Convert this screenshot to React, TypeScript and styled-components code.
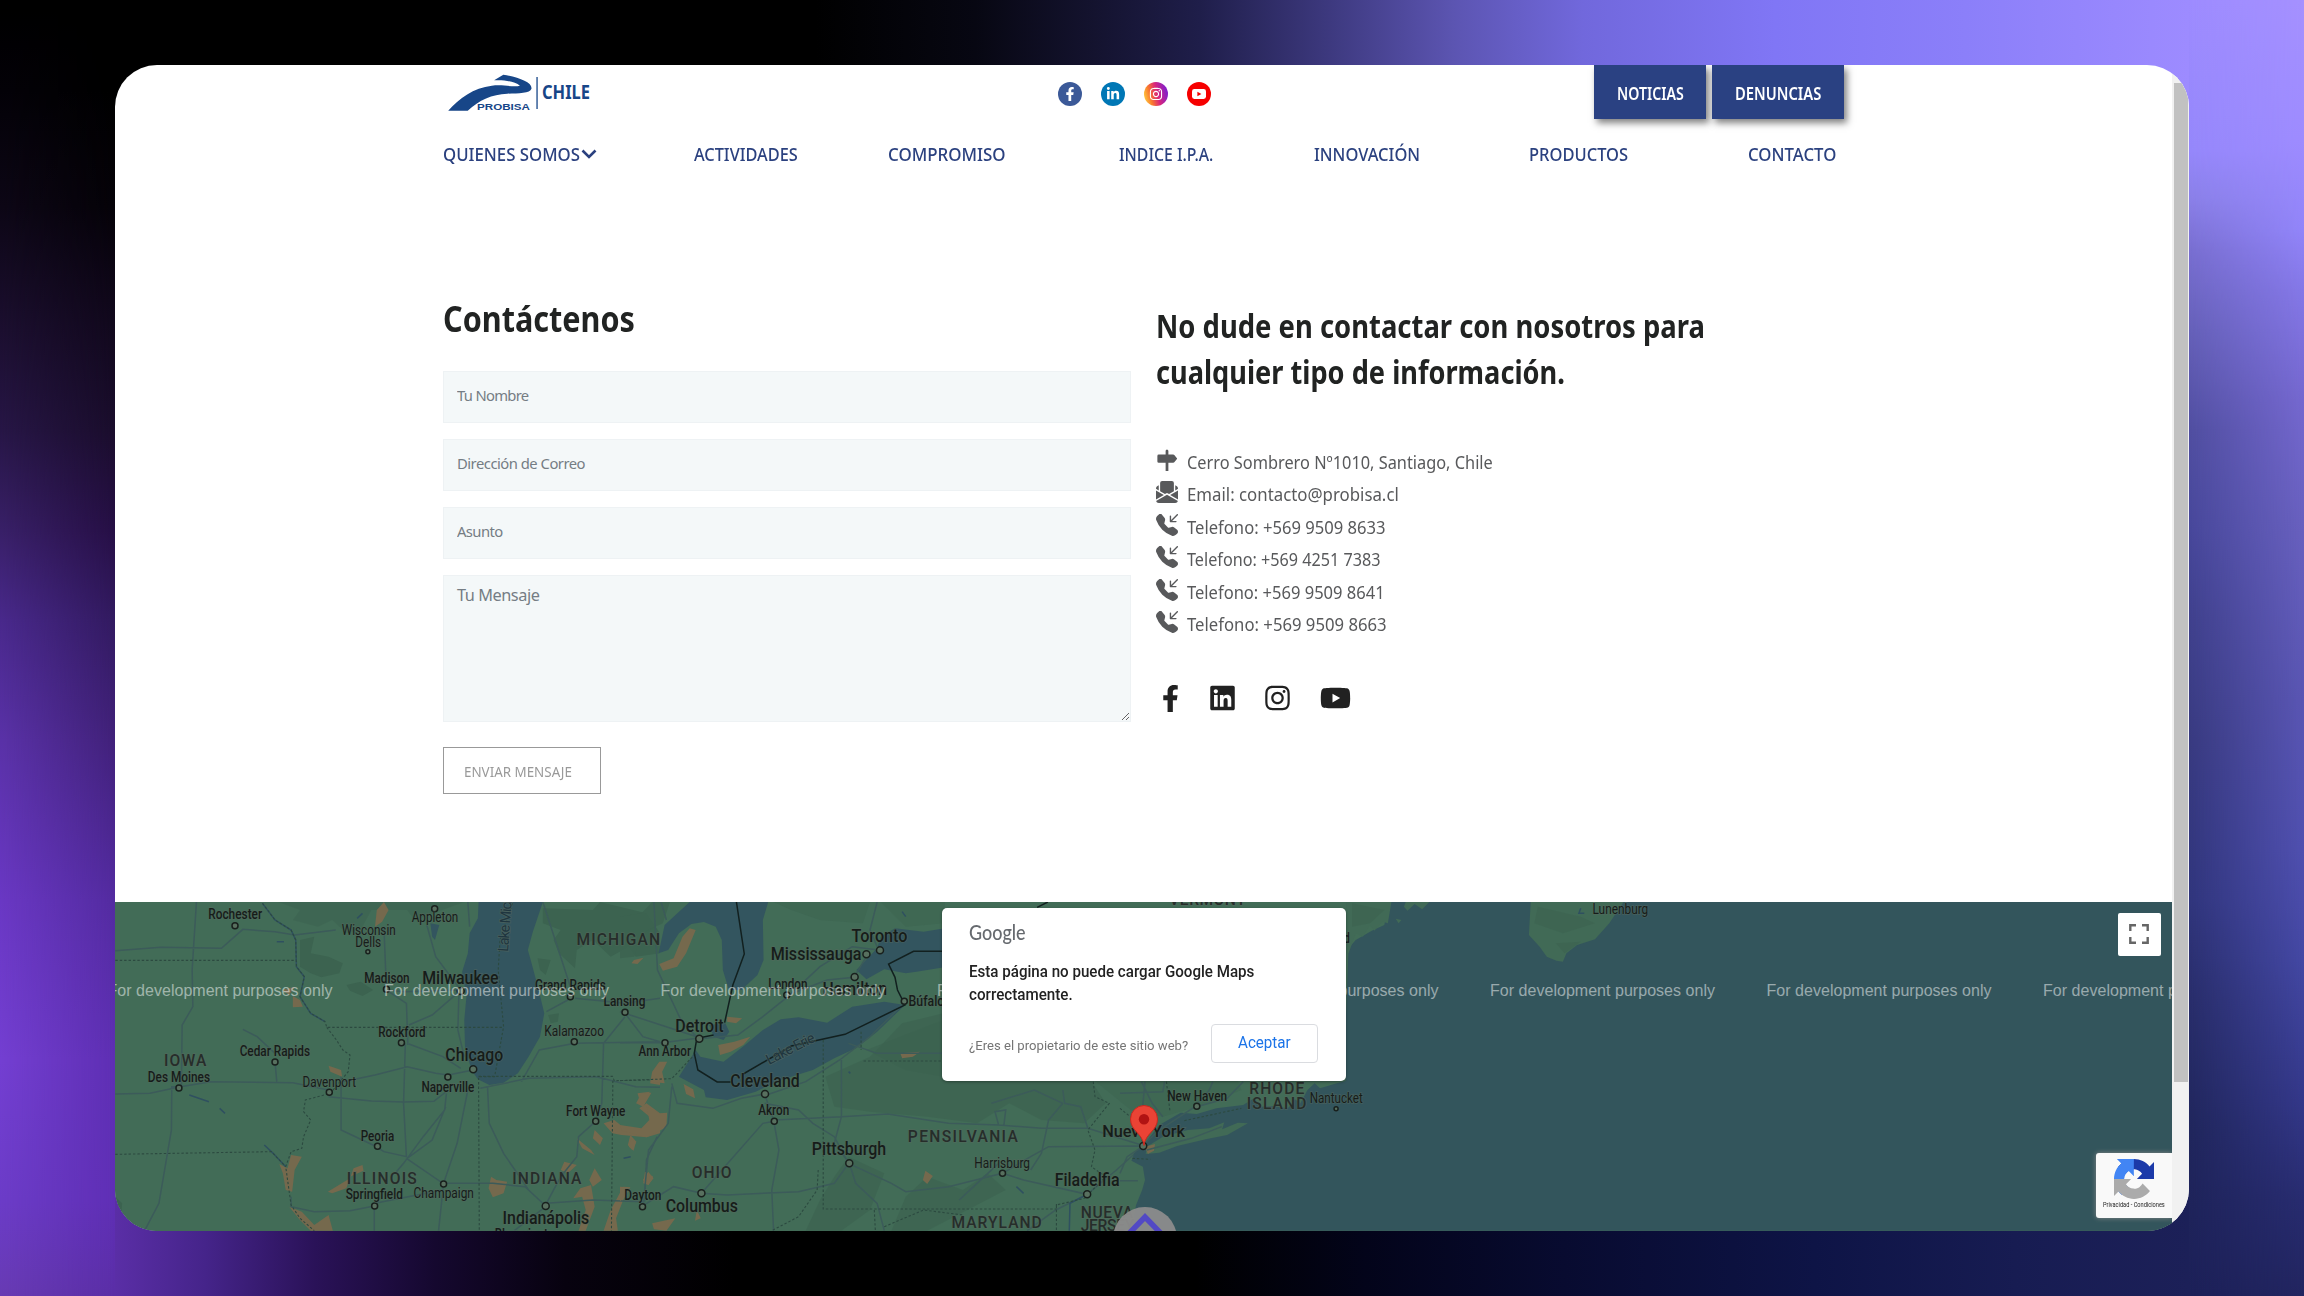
import React, { useLayoutEffect, useRef, useState } from "react";
import styled, { createGlobalStyle } from "styled-components";
import { BsSignpostFill, BsEnvelopePaperFill, BsTelephoneInboundFill } from "react-icons/bs";
import { FaFacebookF, FaLinkedin, FaInstagram, FaYoutube, FaLinkedinIn } from "react-icons/fa";

const GlobalStyle = createGlobalStyle`
  * { box-sizing: border-box; }
  body { margin: 0; background: #000; font-family: "Noto Sans", "Open Sans", sans-serif; }
  h1, h2, p, ul { margin: 0; padding: 0; font-weight: inherit; }
`;

/* ---------- Backdrop ---------- */

const Backdrop = styled.div`
  width: 2304px;
  height: 1296px;
  display: grid;
  grid-template-columns: 115px 2074px 115px;
  grid-template-rows: 65px 1166px 65px;
  overflow: hidden;
`;

const Edge = styled.div<{ $outer: string; $inner: string; $fade: string; $area: string }>`
  grid-area: ${(p) => p.$area};
  display: grid;
  background: linear-gradient(180deg, ${(p) => p.$outer});
  &::after {
    content: "";
    background: linear-gradient(180deg, ${(p) => p.$inner});
    mask-image: linear-gradient(${(p) => p.$fade}, transparent, #000);
  }
`;

const TopEdge = styled.div`
  grid-area: 1 / 2 / 3 / 3;
  height: 180px;
  background: linear-gradient(90deg, #000 0, #000 700px, #070712 860px, #14132f 980px, #1f1e4a 1085px, #3c387d 1210px,
    #5c55b2 1340px, #7168dc 1468px, #8076f5 1660px, #8b7ff9 1850px, #9d8bff 2074px);
`;

const BottomEdge = styled.div`
  grid-area: 2 / 2 / 4 / 3;
  align-self: end;
  height: 180px;
  background: linear-gradient(90deg, #5a2ea6 0, #45248a 90px, #2a1258 200px, #15082f 320px, #07020f 450px, #000 620px,
    #000 1080px, #03041a 1250px, #080b30 1450px, #0e1446 1700px, #171c52 1900px, #1c2058 2074px);
`;

const leftOuter =
  "#000 0, #040208 90px, #0d0716 207px, #1c0f30 330px, #271646 430px, #392068 530px, #49298c 620px, #5a32a8 740px, #6a38c4 900px, #743fd2 1060px, #6c3cc8 1200px, #683bb4 1296px";
const leftInner =
  "#000 0, #000 90px, #050208 207px, #0f0719 300px, #1a0d2c 430px, #260f45 530px, #321a60 620px, #41217a 740px, #532ba0 900px, #5e2fb3 1060px, #5f2fb5 1200px, #5a2ea6 1296px";
const rightOuter =
  "#a591ff 0, #9e8cff 140px, #9285fa 230px, #8578e8 290px, #7568d0 400px, #6961c0 520px, #5a56b4 700px, #5050b0 850px, #4448a4 960px, #34388a 1100px, #282c70 1200px, #222560 1296px";
const rightInner =
  "#9d8bff 0, #9587fb 150px, #8a80e8 197px, #786ed0 250px, #6560b8 330px, #504ea0 430px, #47479a 530px, #3f408c 620px, #383a80 740px, #30357c 900px, #282d6a 1000px, #20265c 1130px, #1c2058 1296px";

/* ---------- Browser window ---------- */

const Window = styled.div`
  grid-area: 2 / 2 / 3 / 3;
  z-index: 1;
  display: flex;
  overflow: hidden;
  border-radius: 42px;
  background: #fff;
`;

const Page = styled.div`
  width: 2057px;
  display: flex;
  flex-direction: column;
`;

const Scrollbar = styled.div`
  flex: 1;
  padding: 18px 1px 0 2px;
  background: #f1f1f1;
`;

const Thumb = styled.div`
  height: 999px;
  background: #c1c1c1;
`;

/* ---------- Text that keeps to a set measure ---------- */

const FitBox = styled.span<{ $width: number }>`
  display: block;
  width: ${(p) => p.$width}px;
  white-space: nowrap;
`;
const FitInner = styled.span`
  display: inline-block;
  transform-origin: 0 50%;
`;

function Fit({ width, children }: { width: number; children: React.ReactNode }) {
  const ref = useRef<HTMLSpanElement>(null);
  const [scale, setScale] = useState(1);
  useLayoutEffect(() => {
    const measure = () => {
      if (ref.current && ref.current.offsetWidth) setScale(width / ref.current.offsetWidth);
    };
    measure();
    document.fonts?.ready.then(measure);
  }, [width]);
  return (
    <FitBox $width={width}>
      <FitInner ref={ref} style={{ transform: `scaleX(${scale})` }}>
        {children}
      </FitInner>
    </FitBox>
  );
}

/* ---------- Header ---------- */

const Header = styled.header`
  padding: 0 328px 0 328px;
  height: 101px;
`;

const TopRow = styled.div`
  display: grid;
  grid-template-columns: 614.5px 536px 1fr;
  height: 77px;
`;

const LogoSlot = styled.div`
  padding-top: 5px;
`;

const SocialRow = styled.div`
  display: flex;
  gap: 19.2px;
  padding-top: 17px;
`;

const RoundIcon = styled.span<{ $bg: string }>`
  display: flex;
  align-items: center;
  justify-content: center;
  width: 24px;
  height: 24px;
  border-radius: 50%;
  background: ${(p) => p.$bg};
  color: #fff;
`;

const HeaderButtons = styled.div`
  display: flex;
  gap: 6px;
`;

const HeaderButton = styled.a<{ $width: number }>`
  width: ${(p) => p.$width}px;
  height: 54px;
  padding: 16px 0 0 23px;
  background: #2a4182;
  color: #fff;
  font-size: 17.5px;
  font-weight: 600;
  line-height: 24px;
  box-shadow: 3px 4px 7px rgba(0, 0, 0, 0.5);
`;

const Nav = styled.nav`
  display: grid;
  grid-template-columns: 251px 193.5px 231.3px 195.2px 215px 219px 1fr;
  color: #2b417f;
  font-size: 18.5px;
  font-weight: 500;
  line-height: 24px;
`;

const NavItem = styled.a`
  display: flex;
  align-items: center;
`;

/* ---------- Contact ---------- */

const Contact = styled.main`
  display: flex;
  height: 736px;
  padding: 132px 0 0 328px;
`;

const Form = styled.form`
  width: 713px;
`;

const FormTitle = styled.h1`
  height: 73px;
  color: #212322;
  font-size: 36px;
  font-weight: 700;
  line-height: 41px;
`;

const Field = styled.input<{ $tracking: string }>`
  display: block;
  width: 688px;
  height: 52px;
  margin-bottom: 16px;
  padding: 0 13px 4px;
  border: 1px solid #eef2f4;
  border-radius: 0;
  background: #f4f8f9;
  font: 14.8px "Noto Sans", sans-serif;
  letter-spacing: ${(p) => p.$tracking};
  &::placeholder { color: #757d84; opacity: 1; }
`;

const MessageBox = styled.textarea`
  display: block;
  width: 688px;
  height: 147px;
  padding: 7px 13px;
  border: 1px solid #eef2f4;
  background: #f4f8f9;
  font: 16.3px/24px "Noto Sans", sans-serif;
  letter-spacing: -0.45px;
  resize: vertical;
  &::placeholder { color: #757d84; opacity: 1; }
`;

const SendButton = styled.button`
  display: block;
  width: 158px;
  height: 47px;
  margin-top: 25px;
  padding: 0 0 0 20px;
  border: 1px solid #999;
  background: #fff;
  color: #999;
  font: 14.5px/20px "Noto Sans", sans-serif;
  text-align: left;
`;

const Info = styled.section`
  padding-top: 5px;
`;

const InfoTitle = styled.h2`
  color: #212322;
  font-size: 32.5px;
  font-weight: 700;
  line-height: 46px;
  height: 143px;
`;

const InfoList = styled.ul`
  list-style: none;
  color: #58595b;
`;

const InfoItem = styled.li`
  display: flex;
  gap: 8.5px;
  height: 32.4px;
  font-size: 18.3px;
  line-height: 32.4px;
  svg { flex: none; width: 22px; height: 22px; margin-top: 3px; }
`;

const InfoSocial = styled.div`
  display: flex;
  align-items: center;
  height: 28px;
  margin: 44px 0 0 6px;
  color: #212121;
`;

const SocialIcon = styled.a<{ $width: number; $height: number; $gap: number }>`
  display: flex;
  margin-right: ${(p) => p.$gap}px;
  svg { width: ${(p) => p.$width}px; height: ${(p) => p.$height}px; }
`;

/* ---------- Map ---------- */

const MapArea = styled.section`
  position: relative;
  height: 329px;
  overflow: hidden;
  background: #33555c;
  font-family: Roboto, sans-serif;
`;

const Dialog = styled.div`
  position: absolute;
  left: 827px;
  top: 5.5px;
  width: 404px;
  height: 173.5px;
  padding: 11px 28px 0 27px;
  border-radius: 5px;
  background: #fff;
  box-shadow: 0 1px 3px rgba(0, 0, 0, 0.35);
`;

const GoogleMark = styled.div`
  color: #666a6f;
  font: 500 20.5px/26px Lato, sans-serif;
`;

const DialogText = styled.p`
  padding-top: 15px;
  color: #222;
  font-size: 16px;
  font-weight: 500;
  line-height: 23.9px;
`;

const DialogFooter = styled.div`
  display: flex;
  align-items: center;
  justify-content: space-between;
  padding-top: 17px;
`;

const OwnerLink = styled.a`
  color: #757575;
  font-size: 13.6px;
  line-height: 20px;
  padding-top: 2px;
`;

const AcceptButton = styled.button`
  width: 107px;
  height: 39px;
  padding: 0 0 1px 26px;
  border: 1px solid #dadce0;
  border-radius: 4px;
  background: #fff;
  color: #1a73e8;
  font: 16px/20px Roboto, sans-serif;
  text-align: left;
`;

const FullscreenButton = styled.button`
  position: absolute;
  left: 2002.5px;
  top: 10.5px;
  width: 43.5px;
  height: 43.5px;
  display: flex;
  align-items: center;
  justify-content: center;
  padding: 0;
  border: 0;
  border-radius: 2px;
  background: #fff;
`;

const Recaptcha = styled.div`
  position: absolute;
  right: 0;
  top: 251px;
  width: 76px;
  height: 65px;
  padding: 6px 0 0 7px;
  border-radius: 3px 0 0 3px;
  background: #f9f9f9;
  box-shadow: 0 0 5px #888;
  color: #222;
  font: 7px/9px Roboto, sans-serif;
  svg { display: block; margin: 0 0 2px 11px; }
`;

const ToTop = styled.div`
  position: absolute;
  left: 998px;
  top: 305px;
  width: 64px;
  height: 64px;
  border-radius: 50%;
  background: rgba(140, 140, 140, 0.95);
  display: flex;
  justify-content: center;
  padding-top: 5px;
`;

const origins: Record<string, number> = { a: 100, b: 620, c: 1120 };

type Label = [sheet: string, x1: number, x2: number, base: number, text: string, size: number, weight: number];

const labels: Label[] = [
  ["a", 303, 454, 87, "Rochester", 14.3, 500],
  ["a", 677, 828, 135, "Wisconsin", 14.3, 400],
  ["a", 715, 787, 170, "Dells", 14.3, 400],
  ["a", 873, 1003, 97, "Appleton", 14.3, 400],
  ["a", 740, 867, 278, "Madison", 14.3, 500],
  ["a", 902, 1116, 282, "Milwaukee", 17.5, 500],
  ["a", 1218, 1416, 300, "Grand Rapids", 14.3, 500],
  ["a", 1410, 1527, 347, "Lansing", 14.3, 500],
  ["a", 1244, 1411, 437, "Kalamazoo", 14.3, 400],
  ["a", 779, 912, 440, "Rockford", 14.3, 500],
  ["a", 391, 588, 499, "Cedar Rapids", 14.3, 500],
  ["a", 134, 308, 577, "Des Moines", 14.3, 500],
  ["a", 567, 717, 590, "Davenport", 14.3, 400],
  ["a", 967, 1129, 513, "Chicago", 17.5, 500],
  ["a", 900, 1048, 606, "Naperville", 14.3, 500],
  ["a", 1305, 1471, 677, "Fort Wayne", 14.3, 500],
  ["a", 730, 824, 752, "Peoria", 14.3, 500],
  ["a", 688, 848, 927, "Springfield", 14.3, 500],
  ["a", 878, 1047, 924, "Champaign", 14.3, 400],
  ["a", 1127, 1370, 1002, "Indianápolis", 17.5, 500],
  ["a", 1105, 1290, 1048, "Bloomington", 14.3, 500],
  ["b", 422, 676, 211, "Mississauga", 17.5, 500],
  ["b", 648, 805, 156, "Toronto", 17.5, 500],
  ["b", 567, 748, 314, "Hamilton", 17.5, 500],
  ["b", 415, 525, 296, "London", 14.3, 500],
  ["b", 808, 908, 347, "Búfalo", 14.8, 500],
  ["b", 155, 290, 426, "Detroit", 17.5, 500],
  ["b", 52, 199, 499, "Ann Arbor", 14.3, 500],
  ["b", 309, 503, 591, "Cleveland", 17.5, 500],
  ["b", 387, 474, 674, "Akron", 14.3, 500],
  ["b", 537, 745, 795, "Pittsburgh", 17.5, 500],
  ["b", 992, 1148, 833, "Harrisburg", 14.3, 400],
  ["b", 1217, 1399, 888, "Filadelfia", 17.5, 500],
  ["b", 12, 116, 930, "Dayton", 14.3, 500],
  ["b", 128, 330, 966, "Columbus", 17.5, 500],
  ["b", 1350, 1582, 742, "Nueva York", 17, 500],
  ["c", 132, 300, 632, "New Haven", 14.3, 500],
  ["c", 531, 680, 638, "Nantucket", 14.3, 400],
  ["c", 1323, 1479, 72, "Lunenburg", 14.3, 400],
  ["c", 540, 643, 158, "Portland", 14.3, 500],
];

const stateLabels: Label[] = [
  ["a", 179, 298, 529, "IOWA", 15.6, 500],
  ["a", 1334, 1568, 166, "MICHIGAN", 15.6, 500],
  ["a", 691, 887, 882, "ILLINOIS", 15.6, 500],
  ["a", 1154, 1348, 882, "INDIANA", 15.6, 500],
  ["b", 201, 312, 864, "OHIO", 15.6, 500],
  ["b", 806, 1114, 756, "PENSILVANIA", 15.6, 500],
  ["b", 928, 1181, 1015, "MARYLAND", 15.6, 500],
  ["b", 1290, 1437, 983, "NUEVA", 15.6, 500],
  ["b", 1290, 1440, 1022, "JERSEY", 15.6, 500],
  ["c", 362, 516, 612, "RHODE", 15.6, 500],
  ["c", 355, 522, 658, "ISLAND", 15.6, 500],
  ["c", 138, 352, 46, "VERMONT", 15.6, 500],
];

type Dot = [sheet: string, x: number, y: number, r: number];
const dots: Dot[] = [
  ["a", 378, 107, 3], ["a", 750, 185, 2], ["a", 937, 56, 3], ["a", 802, 298, 3], ["a", 1010, 303, 3.5],
  ["a", 1317, 320, 3], ["a", 1470, 367, 3], ["a", 1328, 455, 3], ["a", 844, 458, 3], ["a", 490, 516, 3],
  ["a", 221, 594, 3], ["a", 642, 607, 3], ["a", 1045, 538, 3.5], ["a", 974, 561, 3], ["a", 1388, 694, 3],
  ["a", 777, 769, 3], ["a", 769, 948, 3], ["a", 962, 882, 3], ["a", 1248, 948, 3.5],
  ["b", 690, 193, 3.5], ["b", 728, 181, 3.5], ["b", 657, 261, 3.5], ["b", 467, 315, 3], ["b", 796, 334, 3],
  ["b", 222, 446, 3.5], ["b", 126, 458, 3], ["b", 406, 612, 3.5], ["b", 432, 694, 3], ["b", 642, 820, 3.5],
  ["b", 1071, 850, 3], ["b", 1308, 913, 3.5], ["b", 63, 950, 3], ["b", 228, 910, 3.5], ["b", 1465, 768, 3.5],
  ["c", 215, 649, 3], ["c", 605, 656, 2],
];

const px = (sheet: string, x: number) => origins[sheet] + x / 2.8;
const py = (y: number) => 890 + y / 3;

const watermarks = [107.5, 384, 660.5, 937, 1213.5, 1490, 1766.5, 2043];

const MapSvg = styled.svg`
  display: block;
  .forest { fill: #3c6350; }
  .water { fill: #33555f; }
  .sea { fill: #33555c; }
  .land { fill: #416a56; }
  .town { fill: #75694d; }
  .road { fill: none; stroke: #3c5b5a; stroke-width: 1.5; vector-effect: non-scaling-stroke; }
  .river { fill: none; stroke: #2f5060; stroke-width: 1.5; vector-effect: non-scaling-stroke; }
  .state { fill: none; stroke: #2c4a40; stroke-width: 1.1; stroke-dasharray: 2.4 2; vector-effect: non-scaling-stroke; }
  .border { fill: none; stroke: #12201f; stroke-width: 1.5; vector-effect: non-scaling-stroke; }
`;

const MapLabel = styled.text<{ $size: number; $weight: number; $fill?: string }>`
  font-family: Roboto, sans-serif;
  font-size: ${(p) => p.$size}px;
  font-weight: ${(p) => p.$weight};
  fill: ${(p) => p.$fill ?? "#161c19"};
  stroke: #57685d;
  stroke-width: 1.6px;
  stroke-opacity: 0.55;
  paint-order: stroke;
`;

const Watermark = styled.text`
  font: 16px "Liberation Sans", Arial, sans-serif;
  fill: rgba(255, 255, 255, 0.5);
`;

function MapDrawing() {
  return (
    <MapSvg width="2057" height="329" viewBox="115 902 2057 329">
      <rect x="115" y="902" width="2057" height="329" fill="#426c57" />

      {/* Midwest */}
      <g transform="translate(100 890) scale(0.357143 0.333333)">
        <path className="forest" d="M500 36 L560 60 540 90 610 110 650 90 690 130 730 120 760 60 860 60 880 90 1020 36Z" opacity=".55" />
        <path className="forest" d="M560 150 L600 140 590 190 640 200 680 220 670 250 620 262 590 250 560 230Z M690 285 L730 275 765 300 735 318 700 302Z M1225 205 L1262 210 1248 255 1232 240Z M1240 55 L1380 60 1400 36 1530 70 1568 130 1568 190 1500 200 1480 170 1430 200 1380 150 1335 180 1330 235 1285 190 1270 150 1290 120 1240 100Z M1255 375 L1285 370 1282 395 1262 400Z M43 920 L62 940 60 970 43 955Z" />
        <path className="water" d="M1060 36 L1058 85 1035 130 1030 190 1014 245 1026 320 1020 390 1022 470 1040 540 1058 568 1090 585 1130 578 1170 550 1200 500 1232 440 1244 370 1226 290 1206 210 1198 180 1212 125 1240 36Z M925 100 L950 105 938 150 930 140Z" />
        <path className="town" d="M795 36 L808 60 790 95 770 110 775 60Z M540 318 L560 330 568 350 540 352Z M510 300 L545 290 530 315Z M640 527 L675 540 678 560 645 545Z M535 795 L565 800 545 840 538 905 520 900 512 850 502 822 525 835Z M735 825 L738 842 700 860 690 895 650 910 638 905 700 865 710 835Z M530 950 L565 965 600 1005 640 975 652 1022 590 1022 560 990Z M1095 860 L1110 870 1140 875 1130 910 1100 922 1088 895Z M1300 815 L1335 825 1310 850 1290 840Z M1385 835 L1405 870 1380 890 1370 870Z M1375 885 L1385 950 1360 1022 1340 1022 1360 960 1350 920 1325 925 1345 895Z M1335 745 L1375 780 1385 795 1350 775Z M1385 720 L1408 745 1400 765 1380 745Z M1410 700 L1440 690 1480 725 1530 720 1550 690 1510 655 1530 640 1568 670 1568 730 1530 742 1460 735 1435 730Z M1505 610 L1540 605 1515 645Z M1485 735 L1502 755 1490 780 1478 765Z M1550 545 L1568 530 1568 585 1540 580Z M1465 890 L1485 892 1465 930 1445 985 1450 1022 1410 1022 1430 960Z M1535 845 L1550 865 1535 885 1520 870Z M1495 210 L1522 203 1505 222 1488 220Z" />
        <path className="road" d="M43 182 L170 172 340 175 400 118 490 125 545 135 660 120 M270 36 L258 240 260 350 230 405 228 590 201 590 200 720 165 940 125 1022 M43 612 L140 610 225 590 310 575 540 578 640 600 M490 516 L495 575 M400 418 L440 440 490 490 M675 560 L675 720 770 768 M680 575 L770 555 860 530 940 550 975 555 1045 540 M640 620 L760 633 850 636 935 634 975 600 M855 460 L850 640 858 800 795 785 770 768 M865 462 L960 500 1010 535 M795 110 L802 300 858 340 862 465 M802 300 L850 305 1005 300 M865 405 L930 375 1000 310 M915 105 L940 200 975 250 1010 300 M1030 36 L1035 110 M1005 310 L1002 420 1020 500 M970 610 L965 660 905 740 850 820 830 845 M858 805 L960 880 1100 880 1190 890 1245 945 M860 805 L930 750 968 650 M1030 600 L1000 760 962 880 948 1022 M1085 590 L1090 700 1130 790 1200 900 1245 945 M768 948 L700 962 600 965 535 950 535 920 M768 948 L768 1022 M770 940 L960 900 M1250 940 L1290 860 1335 800 1340 740 1388 694 1405 640 1410 460 1470 380 M1065 595 L1200 565 1390 560 1500 590 1568 592 M1180 575 L1230 480 1330 460 1568 455 M1330 325 L1470 340 1568 325 M1250 940 L1380 930 1520 935 M1250 948 L1160 1022 M1525 935 L1530 810 1560 740 M1470 370 L1520 440 1568 455 M1240 36 L1320 300 M1250 365 L1310 330" />
        <path className="river" d="M455 40 L490 90 535 120 548 150 550 230 572 260 560 320 590 370 630 395 M720 85 L735 70 M495 155 L515 155 M250 615 L305 635 M335 655 L350 670 M460 765 L485 790 520 830" />
        <path className="state" d="M43 211 L548 211 M455 40 L490 90 535 120 548 150 550 230 572 260 560 320 590 370 630 395 635 412 1130 412 M635 412 L662 450 680 480 700 495 695 545 645 610 575 630 570 665 590 690 570 740 565 775 535 785 520 830 535 945 560 985 600 1022 M43 793 L480 785 520 830 M1155 40 L1120 150 1115 240 1130 410 1105 560 1060 560 1062 1022 M1060 559 L1435 559 1440 572 1568 569 M1436 572 L1432 1022" />
      </g>

      {/* Great Lakes, Ohio and Pennsylvania */}
      <g transform="translate(620 890) scale(0.357143 0.333333)">
        <path className="forest" d="M0 80 L60 70 90 36 140 36 120 100 60 130 40 200 0 205Z" opacity=".8" />
        <path className="forest" d="M430 36 L700 36 680 100 560 90 480 60Z M730 36 L910 36 905 100 800 110Z" opacity=".5" />
        <path className="forest" d="M575 560 L700 500 790 400 905 370 905 573 1320 573 1360 640 1300 700 1180 690 1090 640 1000 700 860 680 700 665 600 650Z M640 800 L740 850 700 960 620 1022 520 1022 560 930 600 860Z M860 860 L960 900 1030 850 1080 900 990 950 860 1022 760 1022 800 920Z" opacity=".65" />
        <path className="forest" d="M690 480 L905 390 905 560 800 540Z" opacity=".6" />
        <path className="water" d="M195 36 L150 80 125 105 108 190 135 180 165 130 200 102 235 96 268 110 285 150 288 240 305 300 340 300 385 255 402 210 400 90 415 36Z M250 405 L295 400 306 425 290 450 262 440Z M212 480 L165 560 235 600 240 622 300 630 380 605 450 570 540 540 600 505 660 475 720 425 798 345 740 335 650 350 580 398 500 382 450 388 400 420 350 465 290 515 225 500Z M910 115 L850 125 770 115 730 140 720 175 662 240 690 268 740 238 800 250 830 245 908 232Z" />
        <path className="town" d="M195 115 L212 120 185 190 160 230 120 242 110 222 150 205 175 140Z M300 380 L342 385 325 400 300 395Z M275 465 L320 455 365 440 345 465 310 485 280 495Z M110 515 L132 515 118 545 125 580 85 575 90 545Z M178 582 L205 598 210 625 185 612Z M60 610 L88 608 65 650 45 640Z M75 650 L110 670 132 668 130 712 75 742 5 722 0 705 60 715 82 690Z M30 745 L45 755 38 782 25 770Z M70 845 L93 860 80 885 65 880Z M855 842 L876 858 860 882 848 870Z M90 1000 L155 985 130 1022 95 1018Z M215 960 L226 985 210 992Z M785 490 L840 485 820 500 790 505Z M0 890 L22 892 0 935Z" />
        <path className="road" d="M95 36 L105 240 175 400 215 440 M0 458 L120 458 215 445 M0 365 L215 440 M225 446 L330 435 400 380 470 320 560 230 650 170 725 180 M470 315 L580 270 655 262 690 200 M145 580 L160 640 260 655 340 625 405 612 430 690 445 780 425 900 430 1022 M145 590 L135 700 80 780 65 945 M410 615 L520 575 615 510 700 440 795 340 M405 640 L500 660 540 700 600 740 640 820 M435 690 L620 680 750 672 920 700 1060 705 1180 715 1310 715 1460 765 M228 910 L300 915 500 905 600 880 640 820 760 880 800 905 920 890 1071 850 1150 800 1200 770 1460 768 M228 910 L400 700 432 694 M228 910 L150 890 60 950 M620 510 L620 680 600 760 642 820 660 880 720 940 740 1022 M1071 850 L1130 870 1308 913 1390 840 1465 768 M1240 600 L1245 640 1290 650 1310 715 M1060 705 L1050 665 1080 660 1075 705 M1308 913 L1220 960 1140 1022 M950 930 L990 890 1060 820 M1240 640 L1200 690 1180 790 1150 840 M1240 640 L1160 600 1040 640 M115 36 L130 90 M640 460 L720 490 905 490 M720 36 L700 120 720 170" />
        <path className="river" d="M790 65 L800 80 M30 800 L10 805 M640 545 L645 550 M1308 913 L1260 940 1258 1022 M1110 890 L1130 910" />
        <path className="state" d="M0 572 L145 566 212 490 M569 450 L569 957 1222 957 1222 940 M682 513 L905 513 M675 425 L675 480 M555 840 L552 900 500 980 425 1022 M1325 575 L1330 620 1370 640 1310 720 1330 780 1320 830 1360 860 1300 925 1222 945 1222 1022 M712 960 L715 1022 M740 1010 L850 960 960 975" />
        <path className="border" d="M326 36 L348 192 316 285 293 398 M262 435 L215 445 208 490 218 540 272 576 310 576 M345 552 L480 468 630 433 798 345 777 300 770 262 752 222 822 184 905 184 M1168 52 L1198 36" />
      </g>

      {/* Atlantic coast */}
      <g transform="translate(1120 890) scale(0.357143 0.333333)">
        <path className="forest" d="M-70 573 L330 573 340 600 250 640 120 680 30 660Z" opacity=".5" />
        <path className="sea" d="M755 36 L740 105 705 122 660 150 640 175 632 400 632 573 600 582 560 595 545 580 525 600 505 640 490 628 470 655 430 648 395 650 375 625 345 645 270 655 215 672 170 668 110 705 70 760 40 790 32 812 64 830 70 870 62 900 45 945 30 1022 2950 1022 2950 36Z" />
        <path className="land" d="M72 792 L75 770 120 740 190 720 250 715 292 697 286 718 330 698 358 700 300 735 240 748 160 768 110 788Z M633 36 L760 36 750 100 735 95 712 122 700 105 680 140 660 130 640 190 633 190Z M800 36 L866 36 846 58 825 42 805 62 795 50Z M772 86 L788 90 780 100Z M1150 36 L1145 135 1175 170 1195 200 1222 212 1240 215 1250 190 1280 165 1330 148 1370 100 1410 36Z" />
        <path className="forest" d="M1170 50 L1290 80 1330 100 1240 130 1160 100Z M650 40 L740 60 700 100 650 110Z M1220 160 L1290 155 1245 190Z" opacity=".6" />
        <path className="town" d="M70 770 L98 762 95 782 78 792Z" />
        <path className="road" d="M65 765 L110 720 210 650 250 600 260 575 M215 650 L300 625 345 575 M75 780 L200 745 285 710 M0 610 L120 605 125 575 M70 575 L60 690 M66 768 L20 800 0 850 M0 872 L50 872 M120 680 L90 640 60 575" />
        <path className="state" d="M0 655 L40 690 65 760 M180 692 L340 655 M130 575 L140 665 M35 805 L85 808" />
        <path className="river" d="M1290 55 L1285 70 1300 70" />
      </g>

      {dots.map(([s, x, y, r]) => (
        <circle key={`${s}${x}${y}`} cx={px(s, x)} cy={py(y)} r={r} fill="#58705f" stroke="#19201d" strokeWidth="1.5" />
      ))}
      {labels.map(([s, x1, x2, base, text, size, weight]) => (
        <MapLabel
          key={text}
          x={px(s, x1)}
          y={py(base)}
          textLength={(x2 - x1) / 2.8}
          lengthAdjust="spacingAndGlyphs"
          $size={size}
          $weight={weight}
        >
          {text}
        </MapLabel>
      ))}
      {stateLabels.map(([s, x1, x2, base, text, size, weight]) => (
        <MapLabel
          key={text}
          x={px(s, x1)}
          y={py(base)}
          textLength={(x2 - x1) / 2.8}
          $size={size}
          $weight={weight}
          $fill="#262d2a"
        >
          {text}
        </MapLabel>
      ))}
      <MapLabel transform="translate(508 952) rotate(-86)" textLength="66" $size={14.5} $weight={400} $fill="#1f3640">
        Lake Michig
      </MapLabel>
      <MapLabel transform="translate(769 1065) rotate(-27)" textLength="53" $size={14.5} $weight={400} $fill="#1f3640">
        Lake Erie
      </MapLabel>
      {watermarks.map((x) => (
        <Watermark key={x} x={x} y="995.5" textLength="225">
          For development purposes only
        </Watermark>
      ))}
      <path
        d="M1144 1145.500 C1142.500 1133 1130.500 1131 1130.500 1119 A13.5 13.5 0 0 1 1157.500 1119 C1157.500 1131 1145.500 1133 1144 1145.500Z"
        fill="#ea4335"
        stroke="#c5291f"
        strokeWidth="1"
      />
      <circle cx="1144" cy="1119.300" r="5.200" fill="#b11313" />
    </MapSvg>
  );
}

function Logo() {
  return (
    <svg width="150" height="46" viewBox="0 0 150 46">
      <g transform="translate(-43 -20) scale(0.574 0.33333)">
        <path
          d="M84 182 C103 145 128 113 160 107 C182 103 198 113 209 107 C200 95 182 89 164 91 L180 74 C206 81 231 97 229 116 C227 130 205 130 187 131 C160 133 138 150 118 182Z"
          fill="#174688"
        />
      </g>
      <text x="34" y="40.3" textLength="53" lengthAdjust="spacingAndGlyphs" fontFamily="Liberation Sans" fontWeight="700" fontSize="9.8" fill="#174688">
        PROBISA
      </text>
      <rect x="93.400" y="7" width="1.300" height="32" fill="#174688" />
      <text x="99" y="29.300" textLength="48" lengthAdjust="spacingAndGlyphs" fontFamily="Noto Sans" fontWeight="700" fontSize="18.800" fill="#174688">
        CHILE
      </text>
    </svg>
  );
}

const details = [
  { icon: BsSignpostFill, text: "Cerro Sombrero Nº1010, Santiago, Chile", width: 305.5 },
  { icon: BsEnvelopePaperFill, text: "Email: contacto@probisa.cl", width: 211.5 },
  { icon: BsTelephoneInboundFill, text: "Telefono: +569 9509 8633", width: 199 },
  { icon: BsTelephoneInboundFill, text: "Telefono: +569 4251 7383", width: 194 },
  { icon: BsTelephoneInboundFill, text: "Telefono: +569 9509 8641", width: 198 },
  { icon: BsTelephoneInboundFill, text: "Telefono: +569 9509 8663", width: 200 },
];

const navItems = [
  { text: "QUIENES SOMOS", width: 137, chevron: true },
  { text: "ACTIVIDADES", width: 104 },
  { text: "COMPROMISO", width: 118 },
  { text: "INDICE I.P.A.", width: 94 },
  { text: "INNOVACIÓN", width: 106 },
  { text: "PRODUCTOS", width: 99 },
  { text: "CONTACTO", width: 88 },
];

export default function App() {
  return (
    <Backdrop>
      <GlobalStyle />
      <Edge $area="1 / 1 / 4 / 2" $outer={leftOuter} $inner={leftInner} $fade="90deg" />
      <TopEdge />
      <BottomEdge />
      <Window>
        <Page>
          <Header>
            <TopRow>
              <LogoSlot>
                <Logo />
              </LogoSlot>
              <SocialRow>
                <RoundIcon $bg="#3b5998"><FaFacebookF size={14} /></RoundIcon>
                <RoundIcon $bg="#0077b5"><FaLinkedinIn size={14} /></RoundIcon>
                <RoundIcon $bg="linear-gradient(75deg, #ffd23f 5%, #f9762e 30%, #d9257c 55%, #8a1fc4 85%)">
                  <FaInstagram size={14} />
                </RoundIcon>
                <RoundIcon $bg="#f60000">
                  <svg width="14" height="10" viewBox="0 0 14 10">
                    <rect width="14" height="10" rx="2.400" fill="#fff" />
                    <path d="M5.400 2.800 L9.400 5 L5.400 7.200Z" fill="#f60000" />
                  </svg>
                </RoundIcon>
              </SocialRow>
              <HeaderButtons>
                <HeaderButton $width={112.5}><Fit width={67}>NOTICIAS</Fit></HeaderButton>
                <HeaderButton $width={132}><Fit width={86}>DENUNCIAS</Fit></HeaderButton>
              </HeaderButtons>
            </TopRow>
            <Nav>
              {navItems.map((item) => (
                <NavItem key={item.text}>
                  <Fit width={item.width}>{item.text}</Fit>
                  {item.chevron && (
                    <svg width="17" height="12" viewBox="0 0 17 12">
                      <path d="M2.500 2.500 L9 9 L15.500 2.500" fill="none" stroke="#2b417f" strokeWidth="2.600" />
                    </svg>
                  )}
                </NavItem>
              ))}
            </Nav>
          </Header>

          <Contact>
            <Form>
              <FormTitle><Fit width={192}>Contáctenos</Fit></FormTitle>
              <Field placeholder="Tu Nombre" $tracking="-0.7px" />
              <Field placeholder="Dirección de Correo" $tracking="-0.5px" />
              <Field placeholder="Asunto" $tracking="-0.6px" />
              <MessageBox placeholder="Tu Mensaje" />
              <SendButton type="button"><Fit width={108}>ENVIAR MENSAJE</Fit></SendButton>
            </Form>
            <Info>
              <InfoTitle>
                <Fit width={548.5}>No dude en contactar con nosotros para</Fit>
                <Fit width={409}>cualquier tipo de información.</Fit>
              </InfoTitle>
              <InfoList>
                {details.map(({ icon: Icon, text, width }) => (
                  <InfoItem key={text}>
                    <Icon />
                    <Fit width={width}>{text}</Fit>
                  </InfoItem>
                ))}
              </InfoList>
              <InfoSocial>
                <SocialIcon $width={17} $height={27} $gap={31}><FaFacebookF /></SocialIcon>
                <SocialIcon $width={25} $height={28} $gap={30}><FaLinkedin /></SocialIcon>
                <SocialIcon $width={25} $height={28} $gap={30}><FaInstagram /></SocialIcon>
                <SocialIcon $width={31} $height={28} $gap={0}><FaYoutube /></SocialIcon>
              </InfoSocial>
            </Info>
          </Contact>

          <MapArea>
            <MapDrawing />
            <ToTop>
              <svg width="40" height="30" viewBox="0 0 40 30">
                <path d="M4 21.500 L20 5 L36 21.500" fill="none" stroke="#5249c4" strokeWidth="5.500" />
              </svg>
            </ToTop>
            <Dialog>
              <GoogleMark><Fit width={57}>Google</Fit></GoogleMark>
              <DialogText>
                <Fit width={285.5}>Esta página no puede cargar Google Maps</Fit>
                <Fit width={103.5}>correctamente.</Fit>
              </DialogText>
              <DialogFooter>
                <OwnerLink><Fit width={219}>¿Eres el propietario de este sitio web?</Fit></OwnerLink>
                <AcceptButton type="button"><Fit width={53}>Aceptar</Fit></AcceptButton>
              </DialogFooter>
            </Dialog>
            <FullscreenButton>
              <svg width="20" height="20" viewBox="0 0 20 20">
                <path d="M1.300 7 V1.300 H7 M13 1.300 H18.700 V7 M18.700 13 V18.700 H13 M7 18.700 H1.300 V13" fill="none" stroke="#666" strokeWidth="2.400" />
              </svg>
            </FullscreenButton>
            <Recaptcha>
              <svg width="40" height="40" viewBox="0 0 64 64">
                <path d="M64 31.955 a33 33 0 0 0 -.014 -1.380 V4.687 l-7.157 7.157 C50.972 4.674 42.033 .093 32.024 .093 c-10.415 0 -19.670 4.960 -25.506 12.643 l11.731 11.855 a15.500 15.500 0 0 1 4.750 -5.330 c2.050 -1.599 4.953 -2.906 8.963 -2.906 .485 0 .859 .057 1.134 .163 4.969 .392 9.276 3.134 11.812 7.115 l-8.304 8.304 c10.518 -.042 22.400 -.066 27.396 .018" fill="#1c3aa9" />
                <path d="M31.862 .094 a33 33 0 0 0 -1.380 .014 H4.594 l7.157 7.157 C4.581 13.122 0 22.061 0 32.071 c0 10.415 4.960 19.670 12.643 25.506 l11.855 -11.731 a15.500 15.500 0 0 1 -5.330 -4.750 c-1.599 -2.050 -2.906 -4.953 -2.906 -8.963 0 -.485 .057 -.859 .163 -1.134 .392 -4.969 3.134 -9.276 7.115 -11.812 l8.304 8.304 c-.042 -10.518 -.066 -22.400 .018 -27.396" fill="#4285f4" />
                <path d="M.001 31.955 c.003 .463 .014 .923 .034 1.380 v25.888 l7.157 -7.157 c5.857 7.170 14.796 11.751 24.806 11.751 10.415 0 19.670 -4.960 25.506 -12.643 L45.773 39.320 a15.500 15.500 0 0 1 -4.750 5.330 c-2.050 1.599 -4.953 2.906 -8.963 2.906 -.485 0 -.859 -.057 -1.134 -.163 -4.969 -.392 -9.276 -3.134 -11.812 -7.115 l8.304 -8.304 c-10.518 .042 -22.400 .066 -27.396 -.018" fill="#ababab" />
              </svg>
              <Fit width={62}>Privacidad - Condiciones</Fit>
            </Recaptcha>
          </MapArea>
        </Page>
        <Scrollbar>
          <Thumb />
        </Scrollbar>
      </Window>
      <Edge $area="1 / 3 / 4 / 4" $outer={rightOuter} $inner={rightInner} $fade="-90deg" />
    </Backdrop>
  );
}
